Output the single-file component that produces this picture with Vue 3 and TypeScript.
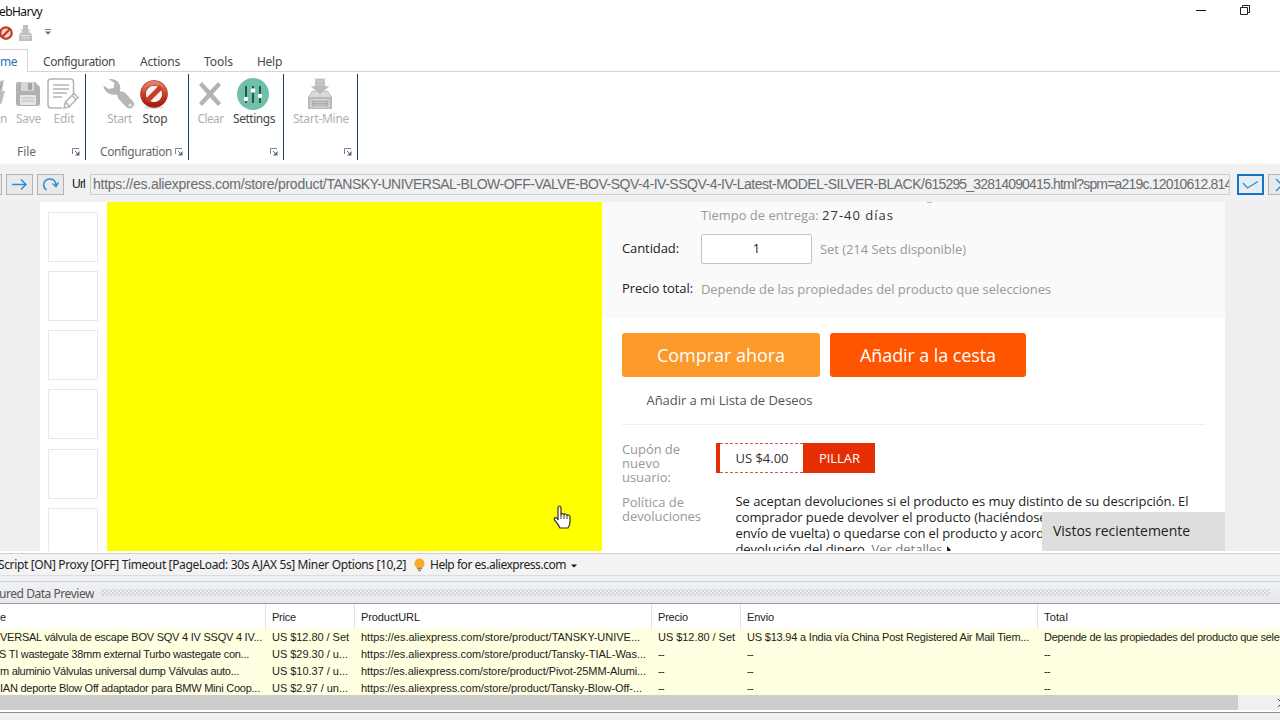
<script setup lang="ts">
// Adjusts tracking so that a label fills the width given in pixels.
const vTrack = {
  mounted(el: HTMLElement, binding: { value: number }) {
    const count = (el.textContent ?? '').length
    const natural = el.getBoundingClientRect().width
    el.style.letterSpacing = `${(binding.value - natural) / count}px`
  },
}

interface Cell { text: string; w: number }

const tabs = [
  { text: 'Configuration', w: 72, cls: 'tab-config' },
  { text: 'Actions', w: 40, cls: 'tab-actions' },
  { text: 'Tools', w: 29, cls: 'tab-tools' },
  { text: 'Help', w: 25, cls: 'tab-help' },
]

const columns: Cell[] = [
  { text: 'e', w: 7 },
  { text: 'Price', w: 24 },
  { text: 'ProductURL', w: 59 },
  { text: 'Precio', w: 30 },
  { text: 'Envio', w: 27 },
  { text: 'Total', w: 24 },
]

const rows: Cell[][] = [
  [
    { text: 'VERSAL válvula de escape BOV SQV 4 IV SSQV 4 IV...', w: 262 },
    { text: 'US $12.80 / Set', w: 77 },
    { text: 'https://es.aliexpress.com/store/product/TANSKY-UNIVE...', w: 279 },
    { text: 'US $12.80 / Set', w: 77 },
    { text: 'US $13.94 a India vía China Post Registered Air Mail Tiem...', w: 282 },
    { text: 'Depende de las propiedades del producto que selecciones', w: 271 },
  ],
  [
    { text: 'S TI wastegate 38mm external Turbo wastegate con...', w: 250 },
    { text: 'US $29.30 / u...', w: 76 },
    { text: 'https://es.aliexpress.com/store/product/Tansky-TIAL-Was...', w: 285 },
    { text: '--', w: 6 }, { text: '--', w: 6 }, { text: '--', w: 6 },
  ],
  [
    { text: 'm aluminio Válvulas universal dump Válvulas auto...', w: 239 },
    { text: 'US $10.37 / u...', w: 76 },
    { text: 'https://es.aliexpress.com/store/product/Pivot-25MM-Alumi...', w: 285 },
    { text: '--', w: 6 }, { text: '--', w: 6 }, { text: '--', w: 6 },
  ],
  [
    { text: 'IAN deporte Blow Off adaptador para BMW Mini Coop...', w: 260 },
    { text: 'US $2.97 / un...', w: 76 },
    { text: 'https://es.aliexpress.com/store/product/Tansky-Blow-Off-...', w: 281 },
    { text: '--', w: 6 }, { text: '--', w: 6 }, { text: '--', w: 6 },
  ],
]
const firstEnds = [262, 249, 239, 260]
</script>

<template>
  <div class="app">
    <header class="titlebar">
      <span class="title"><span v-track="43">ebHarvy</span></span>
      <svg class="win-min" width="10" height="10"><path d="M0 5.5H10" stroke="#111" /></svg>
      <svg class="win-max" width="11" height="11" fill="none" stroke="#222"><path d="M.5 2.5h7v7h-7zM2.5 2.500V.5h7v7h-2" /></svg>
    </header>

    <div class="quick">
      <svg class="q-stop" width="14" height="14" viewBox="0 0 28 28"><circle cx="14" cy="14" r="11.500" fill="#f3d8d2" stroke="#c43b22" stroke-width="4.500" /><path d="M6 22 22 6" stroke="#c43b22" stroke-width="4.500" /></svg>
      <svg class="q-mine" width="13" height="16" viewBox="0 0 26 32"><path d="M8 0h10v9h5l-5 6h5l3 6v11H0V21l3-6h5L3 9h5z" fill="#bfbfbf" /><path d="M3 21h20M5 26h16" stroke="#e4e4e4" stroke-width="2" /></svg>
      <svg class="q-more" width="6" height="6"><path d="M0 .5h6" stroke="#777" /><path d="M0 2.500h6L3 5.800z" fill="#66717d" /></svg>
    </div>

    <nav class="tabs">
      <div class="tab-home"><span v-track="17">me</span></div>
      <span v-for="t in tabs" :key="t.text" :class="['tab', t.cls]"><span v-track="t.w">{{ t.text }}</span></span>
    </nav>

    <section class="ribbon">
      <div class="group g-file">
        <div class="tools">
          <div class="tool t-open">
            <svg width="6" height="32"><path d="M0 3 4 2 2 13h3L2 24 0 27z" fill="#bdbdbd" /><path d="M0 11 2 5" stroke="#999" /></svg>
            <span class="off" v-track="6">n</span>
          </div>
          <div class="tool t-save">
            <svg width="26" height="32" viewBox="0 0 26 32"><path d="M3 4h17l5 5v16q0 3-3 3H4q-3 0-3-3V6q0-2 2-2z" fill="#b1b1b1" /><path d="M6 4h13v9H6z" fill="#d6d6d6" /><path d="M13 5h4v7h-4z" fill="#a3a3a3" /><path d="M5 17h16v10H5z" fill="#e5e5e5" /><path d="M7 20h12M7 23h12" stroke="#bbb" /></svg>
            <span class="off" v-track="25">Save</span>
          </div>
          <div class="tool t-edit">
            <svg width="32" height="32" viewBox="0 0 32 32" fill="none" stroke="#b4b4b4" stroke-width="1.500"><path d="M26.500 17V4q0-3-3-3H4Q1 1 1 4v23q0 3 3 3h11" /><path d="M6 7h16M6 11h16M6 15h14M6 19h9" /><path d="m17 30 1.500-6L27 15.500l4 4L22 29zM18.500 24l4 4.500M25 17.500l4 4" /></svg>
            <span class="off" v-track="21">Edit</span>
          </div>
        </div>
        <div class="caption c-file"><span v-track="19">File</span></div>
        <svg class="launch" width="8" height="8" fill="none"><path d="M.5 6V.5H7" stroke="#7b8794" /><path d="m3 3 3 3" stroke="#526a82" /><path d="M7.500 3v4.500H3z" fill="#526a82" /></svg>
      </div>
      <div class="group g-config">
        <div class="tools">
          <div class="tool t-start">
            <svg width="33" height="32" viewBox="0 0 33 32"><path d="M7 1.500c6-2 13 4 11 11l-4 4c-7 1-12-3-12.500-9l5 3.500 5-1 1-5z" fill="#b5b5b5" /><path d="m14 13 5 4" stroke="#b5b5b5" stroke-width="5" /><path d="m20 18 7.500 8" stroke="#b7b7b7" stroke-width="9" stroke-linecap="round" /><circle cx="28" cy="27" r="1.500" fill="#eee" /></svg>
            <span class="off" v-track="25">Start</span>
          </div>
          <div class="tool t-stop">
            <svg width="28" height="32" viewBox="0 0 28 32"><defs><linearGradient id="red" x2="0" y2="1"><stop stop-color="#e77e65" /><stop offset=".55" stop-color="#c93a21" /><stop offset="1" stop-color="#a61f0d" /></linearGradient></defs><ellipse cx="14" cy="29.500" rx="10" ry="1.500" fill="#ddd" /><circle cx="14" cy="16" r="11" fill="#f7f0ee" stroke="#8d2a1d" stroke-width="5.500" /><circle cx="14" cy="16" r="11" fill="none" stroke="url(#red)" stroke-width="4.500" /><path d="M7 23 21 9" stroke="#c83d25" stroke-width="5" /></svg>
            <span v-track="25">Stop</span>
          </div>
        </div>
        <div class="caption c-config"><span v-track="72">Configuration</span></div>
        <svg class="launch" width="8" height="8" fill="none"><path d="M.5 6V.5H7" stroke="#7b8794" /><path d="m3 3 3 3" stroke="#526a82" /><path d="M7.500 3v4.500H3z" fill="#526a82" /></svg>
      </div>
      <div class="group g-settings">
        <div class="tools">
          <div class="tool t-clear">
            <svg width="26" height="32" viewBox="0 0 26 32"><path d="m2 7 3-3 8 8.500L21 4l3 3-8 9 8 9-3 3-8-8.500L5 28l-3-3 8-9z" fill="#b3b3b3" /></svg>
            <span class="off" v-track="26">Clear</span>
          </div>
          <div class="tool t-settings">
            <svg width="32" height="32"><circle cx="16" cy="16" r="16" fill="#70bfa9" /><path d="M9 8v17M16 8v17M23 8v17" stroke="#24564d" stroke-width="2" /><circle cx="9" cy="21" r="2.300" fill="#fff" /><circle cx="16" cy="12.500" r="2.300" fill="#fff" /><circle cx="23" cy="18" r="2.300" fill="#fff" /></svg>
            <span v-track="42">Settings</span>
          </div>
        </div>
        <svg class="launch" width="8" height="8" fill="none"><path d="M.5 6V.5H7" stroke="#7b8794" /><path d="m3 3 3 3" stroke="#526a82" /><path d="M7.500 3v4.500H3z" fill="#526a82" /></svg>
      </div>
      <div class="group g-mine">
        <div class="tools">
          <div class="tool t-mine">
            <svg width="26" height="32" viewBox="0 0 26 32"><path d="M5 13h16l4 6v11q0 1-1 1H2q-1 0-1-1V19z" fill="#b9b9b9" /><path d="M5 14h16l3 5H2z" fill="#dadada" /><path d="M8 .5h10V8h4.500L13 17 3.500 8H8z" fill="#bcbcbc" stroke="#eee" stroke-width=".6" /><path d="M10 3h6M10 6h6" stroke="#d7d7d7" /><path d="M4 22h18v7H4z" fill="#aaa" stroke="#e6e6e6" /><path d="M6 24.500h14M6 27h14" stroke="#ccc" /></svg>
            <span class="off" v-track="56">Start-Mine</span>
          </div>
        </div>
        <svg class="launch" width="8" height="8" fill="none"><path d="M.5 6V.5H7" stroke="#7b8794" /><path d="m3 3 3 3" stroke="#526a82" /><path d="M7.500 3v4.500H3z" fill="#526a82" /></svg>
      </div>
    </section>

    <section class="address">
      <div class="nav-btn b-back"></div>
      <div class="nav-btn b-next"><svg width="17" height="13" fill="none" stroke="#2a91d4" stroke-width="1.500"><path d="M1 6.500h14M10 1.500l5 5-5 5" /></svg></div>
      <div class="nav-btn b-reload"><svg width="17" height="15" fill="none" stroke="#2a91d4" stroke-width="1.500"><path d="M4.500 13C0 10 1 2 8 2q6 0 6 7M10.500 6.500 14 9.500l2.500-4" /></svg></div>
      <span class="url-label"><span v-track="13">Url</span></span>
      <div class="url"><span v-track="233.5">https://es.aliexpress.com/store/product/</span><span v-track="598">TANSKY-UNIVERSAL-BLOW-OFF-VALVE-BOV-SQV-4-IV-SSQV-4-IV-Latest-MODEL-SILVER-BLACK/</span><span v-track="307">615295_32814090415.html?spm=a219c.12010612.814</span></div>
      <div class="nav-btn b-go"><svg width="17" height="10" fill="none" stroke="#2a91d4" stroke-width="1.300"><path d="m1 3 4.500 5L16 1.500" /></svg></div>
      <div class="nav-btn b-cancel"><svg width="14" height="14" fill="none" stroke="#2a91d4" stroke-width="1.500"><path d="m1 1 12 12M13 1 1 13" /></svg></div>
    </section>

    <main class="browser">
      <div class="page">
        <div class="thumbs"><div v-for="n in 6" :key="n" class="thumb"></div></div>
        <div class="photo"></div>
        <div class="detail">
          <div class="spec">
            <i class="remnant"></i>
            <div class="line delivery"><span class="muted" v-track="121">Tiempo de entrega:&nbsp;</span><span class="days" v-track="72">27-40 días</span></div>
            <div class="line quantity"><span class="key"><span v-track="57">Cantidad:</span></span><span class="qty">1</span><span class="muted sets"><span v-track="146">Set (214 Sets disponible)</span></span></div>
            <div class="line total"><span class="key"><span v-track="71">Precio total:</span></span><span class="muted"><span v-track="350">Depende de las propiedades del producto que selecciones</span></span></div>
          </div>
          <div class="buttons">
            <div class="buy"><span v-track="128">Comprar ahora</span></div>
            <div class="cart"><span v-track="136">Añadir a la cesta</span></div>
          </div>
          <div class="wish"><span v-track="166">Añadir a mi Lista de Deseos</span></div>
          <div class="info coupon-row">
            <div class="label"><span v-track="58">Cupón de</span><span v-track="38">nuevo</span><span v-track="49">usuario:</span></div>
            <div class="coupon"><div class="amount"><span v-track="53">US $4.00</span></div><div class="claim"><span v-track="41">PILLAR</span></div></div>
          </div>
          <div class="info policy-row">
            <div class="label"><span v-track="62">Política de</span><span v-track="79">devoluciones</span></div>
            <div class="policy">
              <span v-track="453">Se aceptan devoluciones si el producto es muy distinto de su descripción. El</span>
              <span v-track="311">comprador puede devolver el producto (haciéndose</span>
              <span v-track="321">envío de vuelta) o quedarse con el producto y acordar</span>
              <span><span v-track="136">devolución del dinero.&nbsp;</span><span class="more" v-track="71">Ver detalles</span><svg width="6" height="8"><path d="m1 0 4 4-4 4z" fill="#222" /></svg></span>
            </div>
          </div>
        </div>
        <div class="recent"><span v-track="137">Vistos recientemente</span></div>
      </div>
      <svg class="cursor" width="18" height="24" viewBox="0 0 18 24"><path d="M5 14V3q0-2 1.500-2T8 3v7q0-2 1.500-1.500T11 10q0-1.500 1.500-1T14 11q0-1.500 1.500-1T17 12v5q0 3-2 6H7q-2-4-5.500-8-.8-2 1-2.300T5 15z" fill="#fff" stroke="#33332a" stroke-width="1.200" /><path d="M8 9v5M11 10v4M14 11v3" stroke="#33332a" /></svg>
    </main>

    <section class="status">
      <div class="status-text"><span v-track="408">Script [ON] Proxy [OFF] Timeout [PageLoad: 30s AJAX 5s] Miner Options [10,2]</span></div>
      <svg class="bulb" width="11" height="14" viewBox="0 0 11 14"><path d="M5.500.5a5 5 0 0 1 3 9v1h-6v-1a5 5 0 0 1 3-9z" fill="#f5ae25" /><path d="M3 10.500h5M4 12.500h3" stroke="#988468" stroke-width="1.500" /></svg>
      <span class="help"><span v-track="136">Help for es.aliexpress.com</span></span>
      <svg class="drop" width="6" height="4"><path d="M0 .5h6l-3 3z" fill="#111" /></svg>
    </section>

    <section class="preview-head">
      <div class="preview-title"><span v-track="95">ured Data Preview</span></div>
      <div class="grip"></div>
    </section>

    <section class="table">
      <div class="row head">
        <div v-for="(c, i) in columns" :key="c.text" :class="['cell', 'col' + i]"><span v-track="c.w">{{ c.text }}</span></div>
      </div>
      <div class="body">
        <div v-for="(row, r) in rows" :key="r" class="row">
          <div v-for="(c, i) in row" :key="i" :class="['cell', 'col' + i]">
            <div v-if="i === 0" class="clip" :style="{ width: firstEnds[r] + 'px' }"><span v-track="c.w">{{ c.text }}</span></div>
            <span v-else v-track="c.w">{{ c.text }}</span>
          </div>
        </div>
      </div>
      <div class="scroll"><div class="thumb-bar"></div><svg width="2" height="8"><path d="m0 0 4 4-4 4" fill="none" stroke="#444" /></svg></div>
    </section>
    <footer class="bottom"></footer>
  </div>
</template>

<style>
body { overflow: hidden; }
</style>

<style scoped>
.app { width: 1280px; height: 720px; overflow: hidden; display: flex; flex-direction: column; background: #fff; font: 12px/16px "Noto Sans", "Open Sans", sans-serif; color: #222; }
.app * { box-sizing: border-box; }
.app > * { flex: none; }
span { display: inline-block; white-space: pre; }
svg { display: block; flex: none; }
.titlebar { height: 22px; display: flex; align-items: flex-start; }
.title { padding-top: 4px; width: 42px; display: flex; justify-content: flex-end; color: #111; }
.win-min { margin: 5px 0 0 1154px; }
.win-max { margin: 5px 0 0 34px; }
.quick { height: 27px; display: flex; align-items: flex-start; }
.q-stop { margin: 4px 0 0 -1px; }
.q-mine { margin: 3px 0 0 6px; }
.q-more { margin: 7px 0 0 13px; }
.tabs { height: 23px; display: flex; border-bottom: 1px solid #d5d5d5; color: #484848; }
.tab-home { width: 28px; height: 23px; border: 1px solid #d5d5d5; border-width: 1px 1px 0 0; background: #fff; color: #2572b5; padding-top: 4px; }
.tab { padding-top: 5px; }
.tab-config { margin-left: 15px; }
.tab-actions { margin-left: 25px; }
.tab-tools { margin-left: 24px; }
.tab-help { margin-left: 24px; }
.ribbon { height: 92px; display: flex; padding-top: 2px; }
.group { height: 86px; border-right: 1px solid #173c61; position: relative; }
.g-file { width: 86px; }
.g-config { width: 103px; }
.g-settings { width: 95px; }
.g-mine { width: 74px; }
.tools { display: flex; padding-top: 4px; height: 68px; }
.tool { display: flex; flex-direction: column; align-items: center; flex: none; color: #484848; }
.tool > span { margin-top: 1px; }
.tool .off { color: #b0b0b0; }
.t-open { width: 9px; align-items: flex-start; }
.t-save { width: 38px; }
.t-save > span, .t-start > span, .t-clear > span { margin-left: 1px; }
.t-edit { width: 34px; margin-left: -1px; }
.t-edit > span, .t-stop > span, .t-settings > span, .t-mine > span { margin-left: 2px; }
.t-start { width: 34px; margin-left: 15px; }
.t-start > span { margin-left: 3px; }
.t-stop { width: 34px; margin-left: 2px; }
.t-clear { width: 36px; margin-left: 3px; }
.t-settings { width: 48px; margin-left: 1px; }
.t-mine { width: 62px; margin-left: 5px; }
.caption { color: #6a6a6a; padding-top: 2px; }
.c-file { padding-left: 17px; }
.c-config { padding-left: 14px; }
.launch { position: absolute; right: 5px; bottom: 4px; }
.address { height: 38px; background: #f0f1f2; display: flex; padding-top: 10px; align-items: flex-start; overflow: hidden; }
.address > * { flex: none; }
.nav-btn { height: 21px; background: #e9e9e9; border: 1px solid #b4b4b4; display: flex; align-items: center; justify-content: center; }
.b-back { width: 2px; border-left: 0; }
.b-next { width: 27px; margin-left: 4px; }
.b-reload { width: 27px; margin-left: 4px; }
.url-label { margin: 2px 0 0 8px; width: 18px; font-family: "Liberation Sans", Arial, sans-serif; color: #111; }
.url { width: 1140px; height: 21px; border: 1px solid #ccc; padding: 1px 0 0 2px; overflow: hidden; white-space: nowrap; color: #6c6c6c; font: 14px/16px "Liberation Sans", Arial, sans-serif; }
.b-go { width: 27px; margin-left: 7px; border: 2px solid #1874c0; background: #e5edf5; }
.b-cancel { width: 27px; margin-left: 4px; }
.browser { height: 349px; background: #efefef; padding-left: 40px; position: relative; overflow: hidden; }
.page { width: 1185px; height: 349px; background: #fff; display: flex; position: relative; overflow: hidden; }
.thumbs { width: 67px; padding: 9.500px 0 0 8px; display: flex; flex-direction: column; gap: 9.300px; flex: none; }
.thumb { width: 50px; height: 50px; flex: none; border: 1px solid #e8e8e8; }
.photo { width: 495px; background: #ff0; flex: none; }
.detail { width: 623px; font: 13px/18px "Open Sans", "Noto Sans", sans-serif; flex: none; }
.spec { height: 116px; background: #fafafa; position: relative; }
.remnant { position: absolute; left: 325px; top: 0; width: 5px; height: 1px; background: #bbb; }
.line { display: flex; align-items: center; }
.muted { color: #999; }
.delivery { height: 26px; padding-left: 99px; }
.days { color: #333; }
.quantity { height: 41px; padding-left: 20px; }
.key { width: 79px; color: #222; padding-bottom: 2px; flex: none; }
.qty { width: 111px; height: 30px; border: 1px solid #c4c4c4; border-radius: 2px; background: #fff; text-align: center; line-height: 27px; margin-right: 8px; }
.sets { padding-top: 1px; }
.total { height: 40px; padding-left: 20px; }
.buttons { display: flex; gap: 10px; padding: 15px 0 0 20px; color: #fff; font-size: 18px; line-height: 45px; text-align: center; }
.buy, .cart { height: 44px; border-radius: 3px; }
.buy { width: 198px; background: #fc992b; }
.cart { width: 196px; background: #ff5500; }
.wish { height: 48px; margin: 0 20px; padding: 14px 0 0 24.500px; border-bottom: 1px solid #eee; color: #555; }
.info { display: flex; padding-left: 20px; }
.coupon-row { height: 71px; padding-top: 18px; }
.label { width: 94px; color: #999; line-height: 14px; display: flex; flex-direction: column; align-items: flex-start; margin-top: -1px; }
.coupon { display: flex; height: 30px; border-left: 4px solid #e62e04; }
.amount { width: 83px; border: dashed #cf5b45; border-width: 1px 0; padding: 5px 0 0 15.500px; color: #333; }
.claim { width: 72px; background: #e62e04; color: #fff; padding: 6px 0 0 16px; }
.policy-row .label { width: 113.500px; }
.policy { line-height: 16px; display: flex; flex-direction: column; align-items: flex-start; color: #222; margin-top: -3px; }
.policy > span { height: 16px; flex: none; }
.policy svg { display: inline-block; margin-left: 3px; }
.more { color: #777; }
.recent { position: absolute; right: 0; bottom: 0; width: 183px; height: 39px; background: #dedede; color: #222; padding: 9px 0 0 11px; font: 14px/20px "Open Sans", sans-serif; }
.cursor { position: absolute; left: 553px; top: 303px; }
.status { height: 30px; margin-top: 2px; border-top: 1px solid #cdcdcf; background: linear-gradient(#f3f3f4 0 21px, #dcdce0 21px 22px, #f0f1f4 22px 27px, #d2d7df 27px 28px, #eeeff3 28px); display: flex; align-items: flex-start; }
.status-text { width: 406px; overflow: hidden; display: flex; justify-content: flex-end; padding-top: 3px; color: #222; }
.bulb { margin: 4px 0 0 8px; }
.help { padding-top: 3px; margin-left: 5px; }
.drop { margin: 10px 0 0 5px; }
.preview-head { height: 21px; display: flex; background: linear-gradient(#f0f1f4, #e6e8ec); border-bottom: 1px solid #9b9b9b; color: #555; }
.preview-title { width: 94px; display: flex; justify-content: flex-end; padding-top: 3px; overflow: hidden; }
.grip { width: 1169px; height: 7px; margin: 6px 0 0 7px; background-image: radial-gradient(circle, #c6c8cc .6px, transparent .9px), radial-gradient(circle, #c6c8cc .6px, transparent .9px); background-size: 4px 4px; background-position: 0 0, 2px 2px; }
.table { height: 109px; background: #fff; border-bottom: 1px solid #8c8c92; font: 11px/17px "Liberation Sans", Arial, sans-serif; color: #222; }
.row { display: flex; height: 17px; }
.cell { flex: none; overflow: hidden; padding-left: 6px; }
.col0 { width: 266px; padding-left: 0; }
.col1 { width: 89px; }
.col2 { width: 297px; }
.col3 { width: 89px; }
.col4 { width: 297px; }
.col5 { width: 242px; }
.head { height: 25px; line-height: 26px; }
.head .cell { border-right: 1px solid #e2e2e2; }
.head .col5 { border: 0; }
.body { height: 66px; background: #ffffe1; overflow: hidden; }
.clip { display: flex; justify-content: flex-end; overflow: hidden; }
.scroll { height: 15px; background: #f0f0f0; display: flex; align-items: center; justify-content: space-between; }
.thumb-bar { width: 1238px; height: 15px; background: #cdcdcd; }
.bottom { height: 8px; background: #eff0f4; }
</style>
